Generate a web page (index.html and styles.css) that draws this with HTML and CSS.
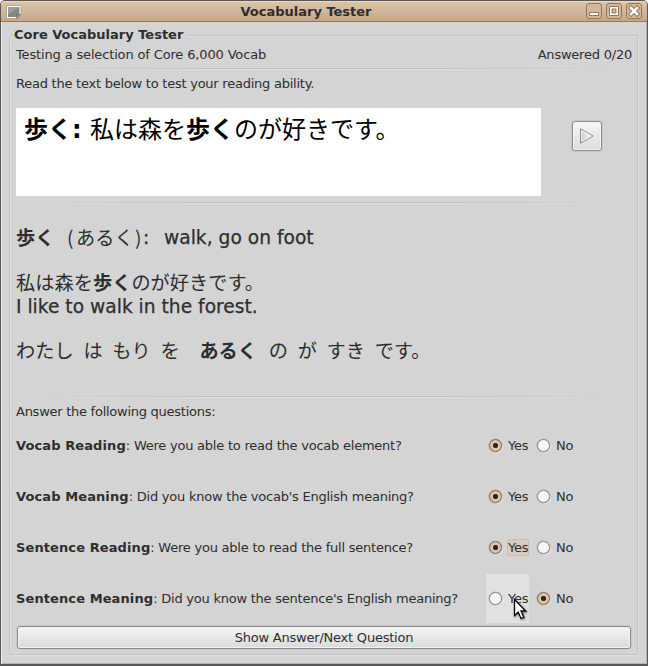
FILE: index.html
```html
<!DOCTYPE html>
<html lang="en">
<head>
<meta charset="utf-8">
<title>Vocabulary Tester</title>
<link rel="stylesheet" href="styles.css">
</head>
<body>
<div class="window">
  <header class="titlebar">
    <svg class="app-icon" width="16" height="14" viewBox="0 0 16 14">
      <path d="M.5.500h14.500v9l-3.500 4H.5z" fill="#fff" stroke="#a39a8e" stroke-width=".8"/>
      <path d="M2 2h11.500v7L10.500 12H2z" fill="#858883"/>
      <path d="M2 2h11.500L2 9z" fill="#9b9e99"/>
      <path d="M14.500 9.500l-3.500 4-.5-3.500z" fill="#a5a7a2" stroke="#60635d" stroke-width=".8"/>
    </svg>
    <h1 class="title">Vocabulary Tester</h1>
    <div class="controls">
      <svg width="16" height="16" viewBox="0 0 16 16"><rect class="ctl" x=".5" y=".5" width="15" height="15" rx="2.500"/><rect x="3.500" y="9.500" width="9" height="3" fill="#fff" stroke="#987656"/></svg>
      <svg width="16" height="16" viewBox="0 0 16 16"><rect class="ctl" x=".5" y=".5" width="15" height="15" rx="2.500"/><path d="M3.500 3.500h9v9h-9zM6 6v4h4v-4z" fill="#fff" fill-rule="evenodd" stroke="#987656"/></svg>
      <svg width="16" height="16" viewBox="0 0 16 16"><rect class="ctl" x=".5" y=".5" width="15" height="15" rx="2.500"/><path d="M5 5l6 6m0-6l-6 6" stroke="#987656" stroke-width="4.600" stroke-linecap="square"/><path d="M5 5l6 6m0-6l-6 6" stroke="#fff" stroke-width="2.600" stroke-linecap="square"/></svg>
    </div>
  </header>
  <main class="frame">
    <div class="legend"><span class="legend-text">Core Vocabulary Tester</span></div>
    <div class="status"><span class="s-left">Testing a selection of Core 6,000 Vocab</span><span>Answered 0/20</span></div>
    <div class="rule"></div>
    <p class="instruction">Read the text below to test your reading ability.</p>
    <div class="prompt-row">
      <div class="prompt" lang="ja"><b class="word">歩く<span class="colon">:</span></b><span>私は森を<b>歩く</b>のが好きです。</span></div>
      <button class="play" aria-label="Play"><svg width="16" height="16" viewBox="0 0 16 16"><defs><linearGradient id="tri" x1="0" x2="1"><stop offset="0" stop-color="#ccccc6"/><stop offset="1" stop-color="#fff"/></linearGradient></defs><path d="M1.500.8v14.400L14.200 8z" fill="url(#tri)" stroke="#8e8e88" stroke-linejoin="round"/><path d="M2.500 2.600v10.800L12 8z" fill="none" stroke="#f8f8f5" stroke-width=".8"/></svg></button>
    </div>
    <div class="rule"></div>
    <section class="answer" lang="ja">
      <p class="a1"><b>歩く</b><span>(</span><span>あるく</span><span>)</span><span class="en">:</span><span class="en">walk, go on foot</span></p>
      <p class="a2">私は森を<b>歩く</b>のが好きです。</p>
      <p class="a3 en">I like to walk in the forest.</p>
      <p class="a4"><span>わたし</span><span>は</span><span>もり</span><span>を</span><b>あるく</b><span>の</span><span>が</span><span>すき</span><span>です。</span></p>
    </section>
    <div class="rule"></div>
    <p class="ask">Answer the following questions:</p>
    <div class="questions">
      <div class="q"><p><b>Vocab Reading</b>: Were you able to read the vocab element?</p><label class="opt"><i class="radio on"></i><span>Yes</span></label><label class="opt"><i class="radio"></i><span>No</span></label></div>
      <div class="q"><p><b>Vocab Meaning</b>: Did you know the vocab's English meaning?</p><label class="opt"><i class="radio on"></i><span>Yes</span></label><label class="opt"><i class="radio"></i><span>No</span></label></div>
      <div class="q"><p><b>Sentence Reading</b>: Were you able to read the full sentence?</p><label class="opt focus"><i class="radio on"></i><span>Yes</span></label><label class="opt"><i class="radio"></i><span>No</span></label></div>
      <div class="q"><p><b>Sentence Meaning</b>: Did you know the sentence's English meaning?</p><label class="opt hover"><i class="radio"></i><span>Yes</span>
        <svg class="cursor" width="15" height="23" viewBox="0 0 15 23"><path d="M1.500 1.500v16l3.700-3.500 2.800 6.500 2.800-1.200L8 13h4.700z" fill="#fff" stroke="#000" stroke-width="1.300"/></svg></label><label class="opt"><i class="radio on"></i><span>No</span></label></div>
    </div>
    <button class="next">Show Answer/Next Question</button>
  </main>
</div>
</body>
</html>
```
FILE: styles.css
```css
* { box-sizing: border-box; }
body, p, h1 { margin: 0; }
body {
  width: 648px; height: 666px; overflow: hidden;
  background: #fff;
  font: 13px/18px "DejaVu Sans", sans-serif;
  letter-spacing: -.22px;
  color: #2e2e2e;
}
button { font: inherit; color: inherit; padding: 0; letter-spacing: inherit; }
.window {
  height: 666px;
  display: flex; flex-direction: column;
  background: #d4d4d4;
  border: 1px solid #5a5657;
  border-bottom-width: 2px;
  border-radius: 5px 5px 0 0;
  box-shadow: inset 1px 0 #f2f2f2, inset -1px -1px #b4b4b4;
  overflow: hidden;
}
.titlebar {
  flex: none;
  height: 21px;
  display: grid; grid-template-columns: 24px 1fr 60px; align-items: center;
  padding: 0 5px;
  background: linear-gradient(#ddc6ac, #c5a888);
  border-bottom: 1px solid #97785a;
  box-shadow: inset 0 1px #ecd9c4;
}
.title { font-size: 13px; line-height: 18px; font-weight: bold; text-align: center; letter-spacing: 0; padding-top: 1px; }
.app-icon { margin-top: 1px; }
.controls { display: flex; gap: 4px; justify-content: flex-end; }
.ctl { fill: #d3b799; stroke: #987656; }
.frame {
  margin: 13px 9px 9px 8px;
  flex: 1;
  border: 1px solid #c3c3c3;
  border-radius: 3px;
  box-shadow: inset 1px 1px #dedede, 1px 1px #dedede;
  padding: 0 5px 0 6px;
  display: flex; flex-direction: column;
}
.legend { height: 10px; display: flex; margin-left: -2px; }
.legend-text { height: 18px; margin-top: -10px; padding-right: 5px; background: #d4d4d4; font-weight: bold; letter-spacing: 0; }
.status { display: flex; justify-content: space-between; height: 18px; }
.s-left { letter-spacing: -.15px; }
.rule {
  flex: none; height: 2px; margin-top: 4px;
  background: linear-gradient(90deg, #d4d4d4, transparent 30%, transparent 70%, #d4d4d4), linear-gradient(#c2c2c2 50%, #e0e0e0 50%);
}
.instruction { margin-top: 5px; letter-spacing: -.24px; }
.prompt-row { display: flex; margin-top: 15px; height: 88px; }
.prompt {
  width: 525px; padding: 2px 9px 2px 8px; background: #fff; color: #000;
  font: 24px/36px "Noto Sans CJK JP", sans-serif;
  letter-spacing: 0;
  display: flex;
}
.word { width: 66px; }
.colon { font: bold 24px/24px "DejaVu Sans", sans-serif; }
.play {
  width: 30px; height: 30px; margin: 13px 0 0 31px;
  display: grid; place-items: center;
  border: 1px solid #8c8c8c; border-radius: 3px;
  background: linear-gradient(#f6f6f6, #dcdcdc);
  box-shadow: inset 0 0 0 1px #f4f4f4, 0 0 0 1px #c8c8c8;
}
.prompt-row + .rule { margin-top: 6px; }
.answer { font: 19.200px/24px "Noto Sans CJK JP", sans-serif; letter-spacing: .04px; height: 192px; padding-top: 21px; }
.answer p { height: 24px; white-space: nowrap; }
.answer .a1 { display: grid; grid-template-columns: 51px 9px 59px 8px 21px auto; justify-content: start; }
.answer .a2 { margin-top: 21px; }
.answer .a4 { display: flex; margin-top: 20px; gap: 9.700px; }
.a4 b { margin: 0 2px 0 10px; }
.answer .en { font-family: "DejaVu Sans", sans-serif; font-size: 18.667px; letter-spacing: 0; -webkit-text-stroke: .25px; position: relative; top: 1px; }
.answer + .rule { margin-top: 0; }
.ask { margin-top: 5px; letter-spacing: -.26px; }
.questions { display: grid; gap: 2px; }
.q { display: grid; grid-template-columns: 470px 43px 48px; height: 49px; align-items: center; }
.q p { white-space: nowrap; letter-spacing: -.23px; }
.q b { letter-spacing: .1px; }
.opt { position: relative; height: 49px; display: flex; align-items: center; padding-left: 3px; gap: 6px; }
.opt + .opt { margin-left: 5px; }
.radio {
  width: 13px; height: 13px; border-radius: 50%;
  border: 1px solid #8c8c8c; background: #f7f7f7;
  box-shadow: 0 0 0 .5px #b0b0b0, 1px 1px 1px #eee;
}
.radio.on { border-color: #80684f; background: radial-gradient(circle, #2d2925 0 2.200px, #dec5a8 3px, #dcc2a4 5px, #c3a27e 6px); }
.focus span { background: #d3cdc4; box-shadow: 0 0 0 1px #cdbca4; border-radius: 1px; height: 15px; line-height: 15px; }
.hover { background: #e1e1e1; }
.cursor { position: absolute; left: 27px; top: 24px; filter: drop-shadow(1px 1px 1px #777); }
.next {
  height: 23px; margin: 3px 1px 0 1px;
  border: 1px solid #8c8c8c; border-radius: 3px;
  background: linear-gradient(#f5f5f5, #dadada);
  box-shadow: inset 0 0 0 1px #f2f2f2, 0 0 0 .5px #bdbdbd;
}
```
